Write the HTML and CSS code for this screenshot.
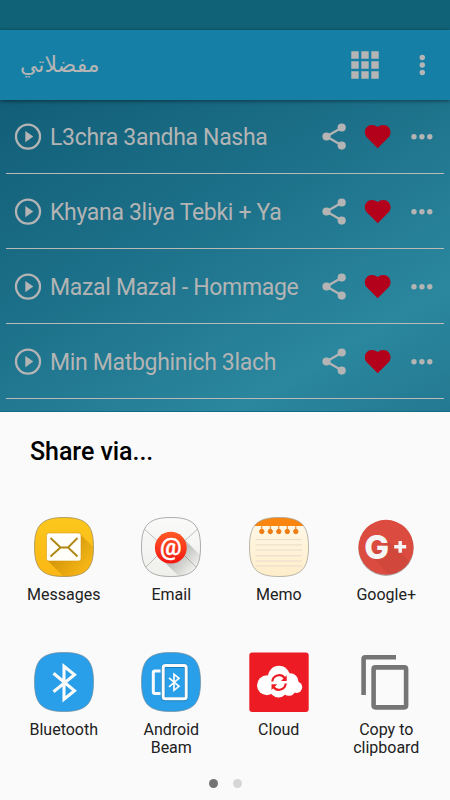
FILE: index.html
```html
<!DOCTYPE html>
<html lang="ar">
<head>
<meta charset="UTF-8">
<meta name="viewport" content="width=device-width, initial-scale=1.0">
<title>مفضلاتي</title>
<link rel="stylesheet" href="styles.css">
</head>
<body>
    <!-- shared icons -->
    <svg class="sprite" width="0" height="0">
        <symbol id="play" viewBox="0 0 28 28">
            <circle cx="14" cy="13.600" r="12" fill="none" stroke="currentColor" stroke-width="2.300"/>
            <path d="M11.300 7.900v11.400l8-5.700z" fill="currentColor"/>
        </symbol>
        <symbol id="share" viewBox="0 0 24 28">
            <path d="M20 4.500L4.500 13.500L20 22.500" fill="none" stroke="currentColor" stroke-width="2.300"/>
            <circle cx="19.700" cy="4.500" r="4.100" fill="currentColor"/>
            <circle cx="4.500" cy="13.500" r="4.100" fill="currentColor"/>
            <circle cx="19.700" cy="22.600" r="4.100" fill="currentColor"/>
        </symbol>
        <symbol id="heart" viewBox="0 0 27 24">
            <path d="M13.700 23.300L3 12.600C-1.500 7.500 1.500 0 8 0C10.300 0 12.200 .8 13.700 2.100C15.200 .8 17.100 0 19.400 0C25.900 0 28.900 7.500 24.400 12.600z" fill="#b3001b"/>
        </symbol>
        <symbol id="dots" viewBox="0 0 22 6">
            <circle cx="3" cy="2.700" r="2.700" fill="currentColor"/>
            <circle cx="10.900" cy="2.700" r="2.700" fill="currentColor"/>
            <circle cx="18.800" cy="2.700" r="2.700" fill="currentColor"/>
        </symbol>
        <symbol id="tile" viewBox="0 0 60 60">
            <path d="M30 .5C52 .5 59.500 8 59.500 30S52 59.500 30 59.500S.5 52 .5 30S8 .5 30 .5z"/>
        </symbol>
        <clipPath id="tile-clip">
            <path d="M30 .5C52 .5 59.500 8 59.500 30S52 59.500 30 59.500S.5 52 .5 30S8 .5 30 .5z"/>
        </clipPath>
        <linearGradient id="yellow" x2="0" y2="1"><stop stop-color="#fcc71d"/><stop offset="1" stop-color="#fbb714"/></linearGradient>
        <linearGradient id="cream" x2="0" y2="1"><stop stop-color="#fff9ea"/><stop offset="1" stop-color="#ffedc9"/></linearGradient>
        <linearGradient id="paper" x2="0" y2="1"><stop stop-color="#fafaf9"/><stop offset="1" stop-color="#efefec"/></linearGradient>
        <linearGradient id="red" x2="0" y2="1"><stop stop-color="#ff5a26"/><stop offset="1" stop-color="#f41611"/></linearGradient>
        <linearGradient id="long-shadow" gradientUnits="userSpaceOnUse" x1="30" y1="30" x2="53" y2="53"><stop offset=".4" stop-color="#000" stop-opacity=".2"/><stop offset="1" stop-color="#000" stop-opacity="0"/></linearGradient>
        <linearGradient id="gold-shadow" gradientUnits="userSpaceOnUse" x1="30" y1="30" x2="53" y2="53"><stop offset=".1" stop-color="#a87000" stop-opacity=".45"/><stop offset="1" stop-color="#a87000" stop-opacity=".03"/></linearGradient>
    </svg>

    <div class="status-bar"></div>
    <header class="app-bar">
        <h1>مفضلاتي</h1>
        <svg class="grid-icon" width="28" height="28" viewBox="0 0 28 28" fill="currentColor">
            <path d="M.3 .3h7.400v7.400H.3zM10.300 .3h7.400v7.400h-7.400zM20.300 .3h7.400v7.400h-7.400zM.3 10.300h7.400v7.400H.3zM10.300 10.300h7.400v7.400h-7.400zM20.300 10.300h7.400v7.400h-7.400zM.3 20.300h7.400v7.400H.3zM10.300 20.300h7.400v7.400h-7.400zM20.300 20.300h7.400v7.400h-7.400z"/>
        </svg>
        <svg width="6" height="22" viewBox="0 0 6 22" fill="currentColor">
            <circle cx="3.300" cy="3.500" r="2.700"/><circle cx="3.300" cy="11" r="2.700"/><circle cx="3.300" cy="18.500" r="2.700"/>
        </svg>
    </header>

    <ul class="songs">
        <li class="song">
            <svg class="play"><use href="#play"/></svg>
            <span class="name">L3chra 3andha Nasha</span>
            <svg class="share"><use href="#share"/></svg>
            <svg class="heart"><use href="#heart"/></svg>
            <svg class="more"><use href="#dots"/></svg>
        </li>
        <li class="song">
            <svg class="play"><use href="#play"/></svg>
            <span class="name">Khyana 3liya Tebki + Ya</span>
            <svg class="share"><use href="#share"/></svg>
            <svg class="heart"><use href="#heart"/></svg>
            <svg class="more"><use href="#dots"/></svg>
        </li>
        <li class="song">
            <svg class="play"><use href="#play"/></svg>
            <span class="name">Mazal Mazal - Hommage</span>
            <svg class="share"><use href="#share"/></svg>
            <svg class="heart"><use href="#heart"/></svg>
            <svg class="more"><use href="#dots"/></svg>
        </li>
        <li class="song">
            <svg class="play"><use href="#play"/></svg>
            <span class="name">Min Matbghinich 3lach</span>
            <svg class="share"><use href="#share"/></svg>
            <svg class="heart"><use href="#heart"/></svg>
            <svg class="more"><use href="#dots"/></svg>
        </li>
    </ul>

    <section class="sheet">
        <h2>Share via...</h2>
        <div class="apps">
            <div class="app">
                <svg viewBox="0 0 60 60">
                    <use href="#tile" fill="url(#yellow)"/>
                    <g clip-path="url(#tile-clip)">
                        <path d="M46 17L72 43V72H42L13 43z" fill="url(#gold-shadow)"/>
                    </g>
                    <rect x="12.500" y="16" width="34.500" height="28" rx="2.500" fill="#fffef8" stroke="#d99b13" stroke-width=".6"/>
                    <path d="M16.500 21L26.500 30.500L16.500 39.500M43.500 21L34 30.500L43.500 39.500M26.500 30.500H34" fill="none" stroke="#b08613" stroke-width="1.900"/>
                    <use href="#tile" fill="none" stroke="#a29060" stroke-width=".8"/>
                </svg>
                <span>Messages</span>
            </div>
            <div class="app">
                <svg viewBox="0 0 60 60">
                    <use href="#tile" fill="url(#paper)"/>
                    <g clip-path="url(#tile-clip)">
                        <path d="M2 11L30 36L58 11M4 51L20 35M56 51L40 35" fill="none" stroke="#b5b5b5" stroke-width=".9"/>
                        <path d="M41 20L68 47V68H47L19 41z" fill="url(#long-shadow)"/>
                    </g>
                    <circle cx="29.800" cy="30.700" r="15.900" fill="url(#red)"/>
                    <text x="29.800" y="37.500" class="at">@</text>
                    <use href="#tile" fill="none" stroke="#999" stroke-width=".8"/>
                </svg>
                <span>Email</span>
            </div>
            <div class="app">
                <svg viewBox="0 0 60 60">
                    <use href="#tile" fill="url(#cream)"/>
                    <path clip-path="url(#tile-clip)" d="M0 0H60V9H0z" fill="#fa850f"/>
                    <g fill="#ef7c13" stroke="#ef7c13">
                        <path d="M12.800 9v6M21.300 9v6M29.800 9v6M38.300 9v6M46.800 9v6" stroke-width="1"/>
                        <circle cx="12.800" cy="14.500" r="2.200"/><circle cx="21.300" cy="14.500" r="2.200"/><circle cx="29.800" cy="14.500" r="2.200"/><circle cx="38.300" cy="14.500" r="2.200"/><circle cx="46.800" cy="14.500" r="2.200"/>
                    </g>
                    <path d="M6.500 22.700H53M6.500 27.900H53M6.500 33H53M6.500 38.800H53M6.500 44H53M6.500 49H53" stroke="#e6dccd"/>
                    <use href="#tile" fill="none" stroke="#a8a49a" stroke-width=".8"/>
                </svg>
                <span>Memo</span>
            </div>
            <div class="app">
                <svg viewBox="0 0 60 60">
                    <clipPath id="round"><circle cx="30" cy="30.300" r="27.500"/></clipPath>
                    <circle cx="30" cy="31.200" r="27.700" fill="#aaa"/>
                    <circle cx="30" cy="30.300" r="27.500" fill="#dc4b3f"/>
                    <path clip-path="url(#round)" d="M33 24L64 55V70H44L14 38z" fill="#c44238" opacity=".4"/>
                    <text x="8.300" y="42" class="g">G</text>
                    <path d="M44.200 24V35.700M38.200 29.800H50.200" stroke="#f5f5f5" stroke-width="3.500"/>
                </svg>
                <span>Google+</span>
            </div>
            <div class="app">
                <svg viewBox="0 0 60 60">
                    <use href="#tile" fill="#289fe8" stroke="#718d9f" stroke-width=".7"/>
                    <path d="M19.500 21.300L40.500 38.800L30 47.300V14.300L40.500 22.800L19.500 39.800" fill="none" stroke="#fafafa" stroke-width="3.100"/>
                </svg>
                <span>Bluetooth</span>
            </div>
            <div class="app">
                <svg viewBox="0 0 60 60">
                    <use href="#tile" fill="#289fe8" stroke="#718d9f" stroke-width=".7"/>
                    <rect x="22.200" y="13.900" width="23" height="33.200" rx="2" fill="none" stroke="#187db9" stroke-width="4.200"/>
                    <rect x="22.200" y="13.600" width="23" height="33.200" rx="2" fill="none" stroke="#fafafa" stroke-width="3"/>
                    <path d="M19.500 19.100H14Q12.300 19.100 12.300 20.800V39.800Q12.300 41.500 14 41.500H19.500" fill="none" stroke="#fafafa" stroke-width="3"/>
                    <path d="M28 25.800L38 34.300L33 38.300V22.300L38 26.300L28 34.800" fill="none" stroke="#fafafa" stroke-width="1.700"/>
                </svg>
                <span>Android Beam</span>
            </div>
            <div class="app">
                <svg viewBox="0 0 60 60">
                    <rect x=".3" y=".5" width="59.400" height="59.400" rx="3" fill="#ed1c24"/>
                    <g fill="#fff">
                        <circle cx="18" cy="33.300" r="10"/><circle cx="30" cy="24.800" r="11"/><circle cx="41" cy="29.800" r="8.500"/><circle cx="47.500" cy="35.300" r="5.700"/><circle cx="29.500" cy="36.300" r="9.200"/><circle cx="40" cy="37.300" r="6.500"/>
                    </g>
                    <g fill="none" stroke="#ed1c24" stroke-width="2.200">
                        <path d="M23.300 29.500A6.800 6.800 0 0 1 35.500 26"/><path d="M36.700 31.500A6.800 6.800 0 0 1 24.500 35"/>
                    </g>
                    <path d="M37.700 23.300V29H32zM22.500 38V32.300H28.200z" fill="#ed1c24"/>
                </svg>
                <span>Cloud</span>
            </div>
            <div class="app">
                <svg viewBox="0 0 60 60" fill="none" stroke="#757575" stroke-width="4.600">
                    <path d="M7.600 43V7Q7.600 5.300 9.300 5.300H40"/>
                    <rect x="17.600" y="15.400" width="32.500" height="40" rx="1.800"/>
                </svg>
                <span>Copy to clipboard</span>
            </div>
        </div>
        <div class="pager">
            <span class="dot active"></span>
            <span class="dot"></span>
        </div>
    </section>
</body>
</html>
```
FILE: styles.css
```css
* {
    margin: 0;
    padding: 0;
    box-sizing: border-box;
}
body {
    width: 450px;
    height: 800px;
    overflow: hidden;
    display: flex;
    flex-direction: column;
    font-family: Roboto, sans-serif;
    background-color: #fafafa;
}
svg {
    display: block;
    flex: none;
}
.sprite {
    position: absolute;
}
.status-bar {
    height: 30px;
    background-color: #106276;
}
.app-bar {
    height: 70px;
    padding: 0 25px 0 20px;
    display: flex;
    align-items: center;
    color: #b5b5b5;
    background-color: #157fa5;
    box-shadow: 0 1px 4px rgba(0, 0, 0, 0.5);
    z-index: 1;
}
.app-bar h1 {
    flex: 1;
    font-family: "DejaVu Sans", sans-serif;
    font-size: 22px;
    font-weight: 400;
    line-height: 30px;
}
.grid-icon {
    margin-right: 40px;
}
.songs {
    height: 312px;
    padding: 0 6px;
    list-style: none;
    color: #b4b4b4;
    background: linear-gradient(150deg, #125e78 0%, #1c6f88 38%, #2a879e 78%, #237991 100%);
    border-bottom: 1px solid #126b84;
}
.song {
    height: 75px;
    padding: 1px 11px 0 8px;
    display: flex;
    align-items: center;
    border-bottom: 1px solid #b9bab8;
}
.song:first-child {
    height: 74px;
    padding-top: 0;
}
.name {
    flex: 1;
    margin-left: 8px;
    padding-top: 2px;
    font-size: 23px;
    letter-spacing: -0.32px;
    line-height: 30px;
    white-space: nowrap;
}
.play {
    width: 28px;
    height: 28px;
}
.share {
    width: 24px;
    height: 28px;
    margin-right: 18px;
}
.heart {
    width: 27px;
    height: 24px;
    margin-right: 20px;
}
.more {
    width: 22px;
    height: 6px;
}
.sheet {
    flex: 1;
    padding: 25px 10px 0;
    background-color: #fafafa;
}
.sheet h2 {
    padding-left: 20px;
    font-size: 25px;
    font-weight: 500;
    letter-spacing: -0.05px;
    line-height: 30px;
    color: #000;
}
.apps {
    margin-top: 50px;
    display: grid;
    grid-template-columns: repeat(4, 107.5px);
    grid-auto-rows: 135px;
}
.app {
    display: flex;
    flex-direction: column;
    align-items: center;
}
.app svg {
    width: 60px;
    height: 60px;
    overflow: visible;
}
.app span {
    width: 90px;
    margin-top: 8.5px;
    font-size: 16px;
    line-height: 18.7px;
    text-align: center;
    color: #212121;
}
.at {
    font: 500 24px Roboto, sans-serif;
    text-anchor: middle;
    fill: #fff;
    stroke: #fff;
    stroke-width: 0.4px;
}
.g {
    font: 800 33px Inter, sans-serif;
    fill: #f5f5f5;
}
.pager {
    margin-top: -8px;
    display: flex;
    justify-content: center;
    gap: 15px;
}
.dot {
    width: 9px;
    height: 9px;
    border-radius: 50%;
    background-color: #d6d6d6;
}
.dot.active {
    background-color: #737373;
}
```
